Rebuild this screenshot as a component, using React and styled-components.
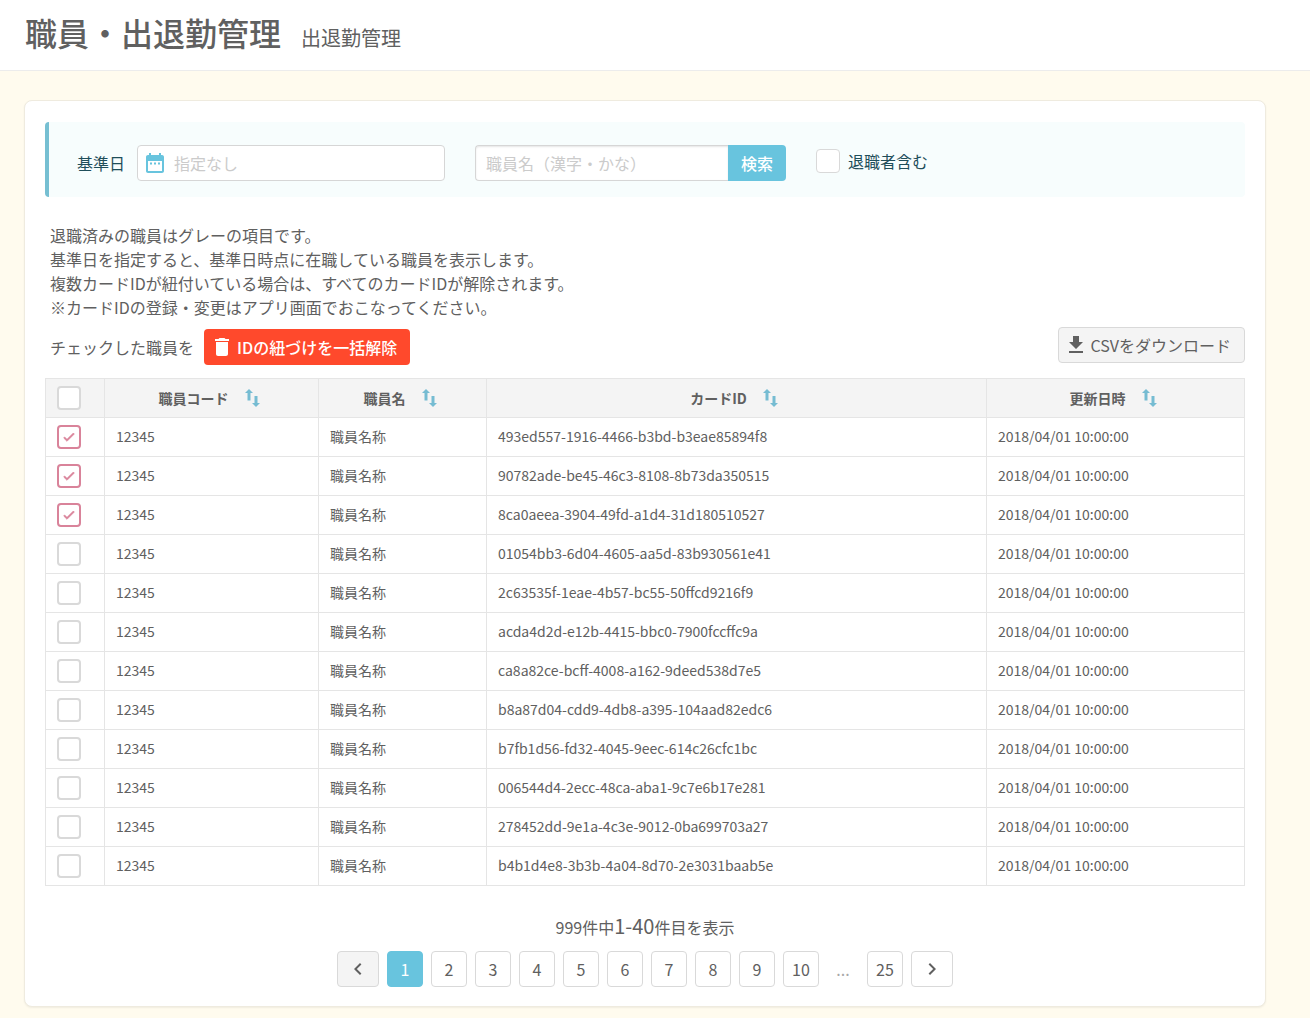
import React, { useState } from "react";
import styled, { createGlobalStyle, css } from "styled-components";

const accent = "#68c4de";
const ink = "#606060";
const line = "#e5e5e5";

const GlobalStyle = createGlobalStyle`
  *, *::before, *::after { box-sizing: border-box; }
  body {
    margin: 0;
    background: #fffbee;
    color: ${ink};
    font-family: "Noto Sans CJK JP", "Noto Sans", sans-serif;
    font-size: 16px;
    line-height: 24px;
  }
  button, input { font: inherit; color: inherit; margin: 0; }
`;

const Header = styled.header`
  display: flex;
  align-items: baseline;
  gap: 20px;
  padding: 8px 25px 14px;
  background: #fff;
  border-bottom: 1px solid #ececec;
`;

const Title = styled.h1`
  margin: 0;
  font-size: 32px;
  line-height: 48px;
  font-weight: 500;
`;

const Subtitle = styled.span`
  font-size: 20px;
`;

const Main = styled.main`
  padding: 29px 44px 10px 24px;
`;

const Card = styled.section`
  padding: 21px 20px 19px;
  background: #fff;
  border: 1px solid #efebdf;
  border-radius: 8px;
  box-shadow: 0 1px 2px rgba(0, 0, 0, 0.06);
`;

const Filters = styled.form`
  display: flex;
  align-items: flex-start;
  gap: 30px;
  padding: 23px 28px 16px;
  border-left: 4px solid #76bfd2;
  border-radius: 4px;
  background: #f7fdfd;
  color: #1f4e5a;
`;

const Field = styled.div`
  display: flex;
  align-items: center;
  gap: 12px;
`;

const InputBox = styled.div`
  display: flex;
  align-items: center;
  gap: 7px;
  width: 308px;
  height: 36px;
  padding: 0 5px;
  border: 1px solid #d6d6d6;
  border-radius: 4px;
  background: #fff;
`;

const TextInput = styled.input`
  flex: 1;
  min-width: 0;
  height: 34px;
  padding: 0;
  border: 0;
  outline: 0;
  background: transparent;
  color: ${ink};
  &::placeholder { color: #cbcbcb; opacity: 1; }
`;

const SearchGroup = styled.div`
  display: flex;
  width: 311px;
`;

const SearchInput = styled(TextInput)`
  height: 36px;
  padding: 0 10px;
  border: 1px solid #d6d6d6;
  border-right: 0;
  border-radius: 4px 0 0 4px;
  background: #fff;
  box-shadow: inset 0 1px 2px rgba(0, 0, 0, 0.1);
`;

const SearchButton = styled.button`
  width: 58px;
  height: 36px;
  padding: 0;
  border: 0;
  border-radius: 0 4px 4px 0;
  background: ${accent};
  color: #fff;
  font-weight: 500;
`;

const CheckLabel = styled.label`
  display: flex;
  align-items: center;
  gap: 8px;
  padding-top: 4px;
`;

const CheckWrap = styled.span`
  display: grid;
  place-items: center;
  width: 24px;
  height: 24px;
  & > * { grid-area: 1 / 1; }
  & > svg { pointer-events: none; color: #d9839a; }
`;

const CheckInput = styled.input`
  appearance: none;
  width: 24px;
  height: 24px;
  border: ${(p) => (p.$thin ? 1 : 2)}px solid #d9d9d9;
  border-radius: 4px;
  background: #fff;
  &:checked { border-color: #d9839a; }
`;

const Notes = styled.p`
  margin: 26px 0 0;
  padding: 0 5px;
`;

const Actions = styled.div`
  display: flex;
  justify-content: space-between;
  margin: 8px 0 13px;
  padding-left: 5px;
`;

const BulkAction = styled.div`
  display: flex;
  align-items: center;
  gap: 10px;
  padding-top: 2px;
`;

const ActionButton = styled.button`
  display: flex;
  align-items: center;
  height: 36px;
  border-radius: 4px;
  ${(p) =>
    p.$danger
      ? css`
          gap: 3px;
          padding: 0 13px 0 6px;
          border: 0;
          background: #ff492c;
          color: #fff;
          font-weight: 500;
        `
      : css`
          gap: 2px;
          padding: 0 13px 0 5px;
          border: 1px solid #d9d9d9;
          background: #f4f4f4;
        `}
`;

const Table = styled.table`
  width: 100%;
  table-layout: fixed;
  border-collapse: collapse;
  font-size: 14px;
  line-height: 24px;
`;

const Column = styled.col`
  width: ${(p) => p.$width};
`;

const Cell = styled.td`
  height: 39px;
  padding: 0 11px;
  border: 1px solid ${line};
  text-align: left;
`;

const HeadCell = styled(Cell)`
  background: #f4f4f4;
`;

const TextCell = styled(Cell)`
  padding-bottom: 2px;
`;

const SortButton = styled.button`
  display: flex;
  align-items: center;
  justify-content: center;
  gap: 16px;
  width: 100%;
  padding: 0;
  border: 0;
  background: none;
  font-weight: 700;
`;

const Summary = styled.p`
  margin: 25px 0 9px;
  line-height: 30px;
  text-align: center;
`;

const Range = styled.span`
  font-size: 20px;
`;

const Pager = styled.nav`
  display: flex;
  justify-content: center;
  gap: 8px;
`;

const PageButton = styled.button`
  display: grid;
  place-items: center;
  width: ${(p) => (p.$wide ? 42 : 36)}px;
  height: 36px;
  padding: 0 0 1px;
  border: 1px solid ${(p) => (p.$current ? accent : "#d9d9d9")};
  border-radius: 4px;
  background: ${(p) => (p.$current ? accent : p.disabled ? "#f4f4f4" : "#fff")};
  color: ${(p) => (p.$current ? "#fff" : ink)};
`;

const Ellipsis = styled.span`
  width: 32px;
  line-height: 36px;
  text-align: center;
  color: #a8a8a8;
`;

const paths = {
  calendar:
    "M9 11.500H7v2h2v-2zm4 0h-2v2h2v-2zm4 0h-2v2h2v-2zm2-7.500h-1V2h-2v2H8V2H6v2H5c-1.110 0-1.990.9-1.990 2L3 20c0 1.100.89 2 2 2h14c1.100 0 2-.9 2-2V6c0-1.100-.9-2-2-2zm0 16H5V10h14v10z",
  trash: "M6 19c0 1.1.9 2 2 2h8c1.1 0 2-.9 2-2V7H6v12zM19 4h-3.5l-1-1h-5l-1 1H5v2h14V4z",
  download: "M19 9h-4V3H9v6H5l7 7 7-7zM5 18v2h14v-2H5z",
  prev: "M15.41 7.41L14 6l-6 6 6 6 1.41-1.41L10.83 12z",
  next: "M10 6L8.59 7.41 13.17 12l-4.58 4.59L10 18l6-6z",
  check: "M9 15.500L5.500 12L4 13.500L9 18.500L20 7.500L18.500 6z",
};

const Icon = ({ name, size = 24, color = "currentColor" }) => (
  <svg width={size} height={size} viewBox="0 0 24 24" fill={color} stroke={name === "check" ? color : "none"} aria-hidden="true">
    <path d={paths[name]} />
  </svg>
);

const SortIcon = () => (
  <svg width="20" height="20" viewBox="1 0 20 20" fill="#76bcd2" aria-hidden="true">
    <path d="M5 1L9 5H6.5V12.500H3.500V5H1zM12 19L8 15H10.500V8H13.500V15H16z" />
  </svg>
);

const Checkbox = ({ thin, ...props }) => (
  <CheckWrap>
    <CheckInput type="checkbox" $thin={thin} {...props} />
    {props.checked && <Icon name="check" size={16} />}
  </CheckWrap>
);

const columns = ["職員コード", "職員名", "カードID", "更新日時"];

const cardIds = [
  "493ed557-1916-4466-b3bd-b3eae85894f8",
  "90782ade-be45-46c3-8108-8b73da350515",
  "8ca0aeea-3904-49fd-a1d4-31d180510527",
  "01054bb3-6d04-4605-aa5d-83b930561e41",
  "2c63535f-1eae-4b57-bc55-50ffcd9216f9",
  "acda4d2d-e12b-4415-bbc0-7900fccffc9a",
  "ca8a82ce-bcff-4008-a162-9deed538d7e5",
  "b8a87d04-cdd9-4db8-a395-104aad82edc6",
  "b7fb1d56-fd32-4045-9eec-614c26cfc1bc",
  "006544d4-2ecc-48ca-aba1-9c7e6b17e281",
  "278452dd-9e1a-4c3e-9012-0ba699703a27",
  "b4b1d4e8-3b3b-4a04-8d70-2e3031baab5e",
];

export default function App() {
  const [selected, setSelected] = useState([0, 1, 2]);
  const [retired, setRetired] = useState(false);
  const [page, setPage] = useState(1);
  const toggle = (i) =>
    setSelected((s) => (s.includes(i) ? s.filter((n) => n !== i) : [...s, i]));
  const all = selected.length === cardIds.length;

  const pageButton = (n) => (
    <PageButton key={n} type="button" $current={n === page} onClick={() => setPage(n)}>
      {n}
    </PageButton>
  );

  return (
    <>
      <GlobalStyle />
      <Header>
        <Title>職員・出退勤管理</Title>
        <Subtitle>出退勤管理</Subtitle>
      </Header>
      <Main>
        <Card>
          <Filters onSubmit={(e) => e.preventDefault()}>
            <Field>
              <label htmlFor="base-date">基準日</label>
              <InputBox>
                <Icon name="calendar" color={accent} />
                <TextInput id="base-date" placeholder="指定なし" />
              </InputBox>
            </Field>
            <SearchGroup>
              <SearchInput aria-label="職員名" placeholder="職員名（漢字・かな）" />
              <SearchButton type="submit">検索</SearchButton>
            </SearchGroup>
            <CheckLabel>
              <Checkbox thin checked={retired} onChange={() => setRetired(!retired)} />
              退職者含む
            </CheckLabel>
          </Filters>

          <Notes>
            退職済みの職員はグレーの項目です。
            <br />
            基準日を指定すると、基準日時点に在職している職員を表示します。
            <br />
            複数カードIDが紐付いている場合は、すべてのカードIDが解除されます。
            <br />
            ※カードIDの登録・変更はアプリ画面でおこなってください。
          </Notes>

          <Actions>
            <BulkAction>
              <span>チェックした職員を</span>
              <ActionButton type="button" $danger>
                <Icon name="trash" />
                IDの紐づけを一括解除
              </ActionButton>
            </BulkAction>
            <ActionButton type="button">
              <Icon name="download" />
              CSVをダウンロード
            </ActionButton>
          </Actions>

          <Table>
            <colgroup>
              <Column $width="59px" />
              <Column $width="214px" />
              <Column $width="168px" />
              <Column $width="auto" />
              <Column $width="258px" />
            </colgroup>
            <thead>
              <tr>
                <HeadCell as="th">
                  <Checkbox
                    aria-label="すべて選択"
                    checked={all}
                    onChange={() => setSelected(all ? [] : cardIds.map((_, i) => i))}
                  />
                </HeadCell>
                {columns.map((c) => (
                  <HeadCell as="th" key={c}>
                    <SortButton type="button">
                      {c}
                      <SortIcon />
                    </SortButton>
                  </HeadCell>
                ))}
              </tr>
            </thead>
            <tbody>
              {cardIds.map((id, i) => (
                <tr key={id}>
                  <Cell>
                    <Checkbox
                      aria-label={id}
                      checked={selected.includes(i)}
                      onChange={() => toggle(i)}
                    />
                  </Cell>
                  <TextCell>12345</TextCell>
                  <TextCell>職員名称</TextCell>
                  <TextCell>{id}</TextCell>
                  <TextCell>2018/04/01 10:00:00</TextCell>
                </tr>
              ))}
            </tbody>
          </Table>

          <Summary>
            999件中<Range>1-40</Range>件目を表示
          </Summary>
          <Pager aria-label="ページ">
            <PageButton type="button" $wide disabled={page === 1} aria-label="前へ">
              <Icon name="prev" />
            </PageButton>
            {[1, 2, 3, 4, 5, 6, 7, 8, 9, 10].map(pageButton)}
            <Ellipsis>...</Ellipsis>
            {pageButton(25)}
            <PageButton type="button" $wide aria-label="次へ">
              <Icon name="next" />
            </PageButton>
          </Pager>
        </Card>
      </Main>
    </>
  );
}
